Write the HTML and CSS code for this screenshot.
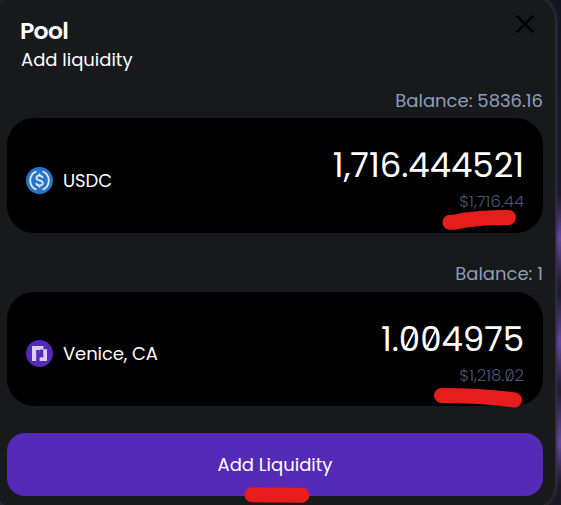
FILE: index.html
```html
<!DOCTYPE html>
<html lang="en">
<head>
  <meta charset="UTF-8">
  <title>Pool - Add liquidity</title>
  <link rel="stylesheet" href="styles.css">
</head>
<body>
  <div class="modal">
    <header>
      <div>
        <h1>Pool</h1>
        <p class="subtitle">Add liquidity</p>
      </div>
      <button class="close-btn" aria-label="Close">
        <svg width="20" height="20" viewBox="0 0 20 20">
          <path d="M1.5 1.5L18.5 18.5M18.5 1.5L1.5 18.5" stroke="#000" stroke-width="2.4"/>
        </svg>
      </button>
    </header>

    <div class="balance"><span>Balance: 5836.16</span></div>
    <div class="card">
      <div class="token">
        <svg class="token-icon" viewBox="0 0 27 27">
          <circle cx="13.5" cy="13.5" r="13.5" fill="#2775ca"/>
          <g fill="none" stroke="#dce9f8" stroke-width="1.8">
            <path d="M10.4 4.4A9.8 9.8 0 0 0 10.4 22.6M16.6 4.4A9.8 9.8 0 0 1 16.6 22.6"/>
            <path d="M16.6 11C16.4 9.4 15.2 8.7 13.5 8.7C11.6 8.7 10.4 9.6 10.4 11C10.4 14.2 16.8 12.4 16.8 16C16.8 17.5 15.5 18.4 13.5 18.4C11.5 18.4 10.3 17.5 10.2 15.9M13.5 6.6V8.9M13.5 18.2V20.5"/>
          </g>
        </svg>
        <span class="token-name">USDC</span>
      </div>
      <div class="amounts">
        <div class="amount">1,716.444521</div>
        <div class="fiat">$1,716.44</div>
      </div>
      <svg class="mark mark-usdc" width="75" height="22" viewBox="0 0 75 22">
        <path d="M8 13.3C13 13.5 16 12.2 24 11C38 9 52 8.3 66.5 8.5"/>
      </svg>
    </div>

    <div class="balance balance-venice"><span>Balance: 1</span></div>
    <div class="card card-venice">
      <div class="token">
        <svg class="token-icon" viewBox="0 0 27 27">
          <circle cx="13.5" cy="13.5" r="13.5" fill="#552ab6"/>
          <path d="M6 6H17.4V9.2H21V21H13.6V17.2H17.2V13H13.6V10H10.2V21H6Z" fill="#d9cdf3"/>
          <path d="M13.6 9.6H17.2V17.2H13.6Z" fill="#552ab6"/>
        </svg>
        <span class="token-name">Venice, CA</span>
      </div>
      <div class="amounts">
        <div class="amount">1.<span class="zero">0</span><span class="zero">0</span>4975</div>
        <div class="fiat">$1,218.<span class="zero">0</span>2</div>
      </div>
      <svg class="mark mark-venice" width="90" height="22" viewBox="0 0 90 22">
        <path d="M8.5 8.5C35 8.5 57 9.5 81.5 13"/>
      </svg>
    </div>

    <button class="btn-primary">
      <span>Add Liquidity</span>
      <svg class="mark mark-btn" width="66" height="16" viewBox="0 0 66 16">
        <path d="M8 7.7C25 8.1 42 8 58 8.2"/>
      </svg>
    </button>
  </div>
</body>
</html>
```
FILE: styles.css
```css
* {
  margin: 0;
  padding: 0;
  box-sizing: border-box;
}

:root {
  --bg-panel: #18191b;
  --bg-card: #000;
  --primary: #552ab6;
  --text: #fff;
  --text-dim: #8b9fbc;
  --text-fiat: #4a5870;
  --mark: #e71d1d;
}

body {
  width: 561px;
  height: 505px;
  overflow: hidden;
  background: linear-gradient(#15151f 0, #1a1828 195px, #65489f 238px, #1f1b2e 285px, #1f1b2e 295px, #65489f 342px, #1f1b2e 390px, #65489f 443px, #1a1823 485px);
  color: var(--text);
  font-family: Poppins, Inter, sans-serif;
  font-size: 18px;
}

.modal {
  width: 564px;
  height: 513px;
  margin: -4px 0 0 -8px;
  padding: 4px 12px 0 14px;
  background: var(--bg-panel);
  border: 1px solid #2c2d32;
  border-radius: 24px;
  box-shadow: 0 0 0 2px rgba(50, 46, 70, 0.5);
}

header {
  display: flex;
  justify-content: space-between;
  height: 87px;
  padding: 13px 8px 0 14px;
}

h1 {
  margin-left: -1px;
  font-size: 23.5px;
  font-weight: 600;
  line-height: 33px;
  letter-spacing: -0.7px;
}

.subtitle {
  line-height: 26px;
}

.close-btn {
  width: 20px;
  height: 20px;
  background: none;
  border: none;
}

.balance {
  height: 30px;
  color: var(--text-dim);
  line-height: 26px;
  text-align: right;
}

.balance-venice {
  height: 31px;
  margin-top: 28px;
}

.card {
  position: relative;
  display: flex;
  justify-content: space-between;
  height: 115px;
  padding: 0 19px;
  background: var(--bg-card);
  border-radius: 27px;
}

.card-venice {
  height: 114px;
}

.token {
  display: flex;
  align-items: center;
  gap: 10px;
  padding-top: 9px;
}

.token-icon {
  width: 27px;
  height: 27px;
}

.token-name {
  letter-spacing: -0.1px;
}

.amounts {
  padding-top: 26px;
  text-align: right;
}

.amount {
  font-size: 34px;
  line-height: 42px;
  letter-spacing: -0.05px;
}

.fiat {
  color: var(--text-fiat);
  font-size: 16.5px;
  font-weight: 300;
  line-height: 31px;
}

/* slashed zero */
.zero {
  position: relative;
}

.zero::after {
  content: "";
  position: absolute;
  top: 50%;
  left: 50%;
  width: 0.065em;
  height: 0.64em;
  background: currentColor;
  transform: translate(-50%, -47%) rotate(27deg);
}

/* red marker strokes */
.mark {
  position: absolute;
  fill: none;
  stroke: var(--mark);
  stroke-width: 15;
  stroke-linecap: round;
  stroke-linejoin: round;
}

.mark-usdc {
  right: 26px;
  bottom: 2px;
}

.mark-venice {
  right: 20px;
  bottom: -3px;
}

.btn-primary {
  position: relative;
  display: block;
  width: 100%;
  height: 63px;
  margin-top: 27px;
  background: var(--primary);
  border: none;
  border-radius: 18px;
  color: var(--text);
  font: inherit;
}

.mark-btn {
  left: 237px;
  bottom: -7px;
}
```
